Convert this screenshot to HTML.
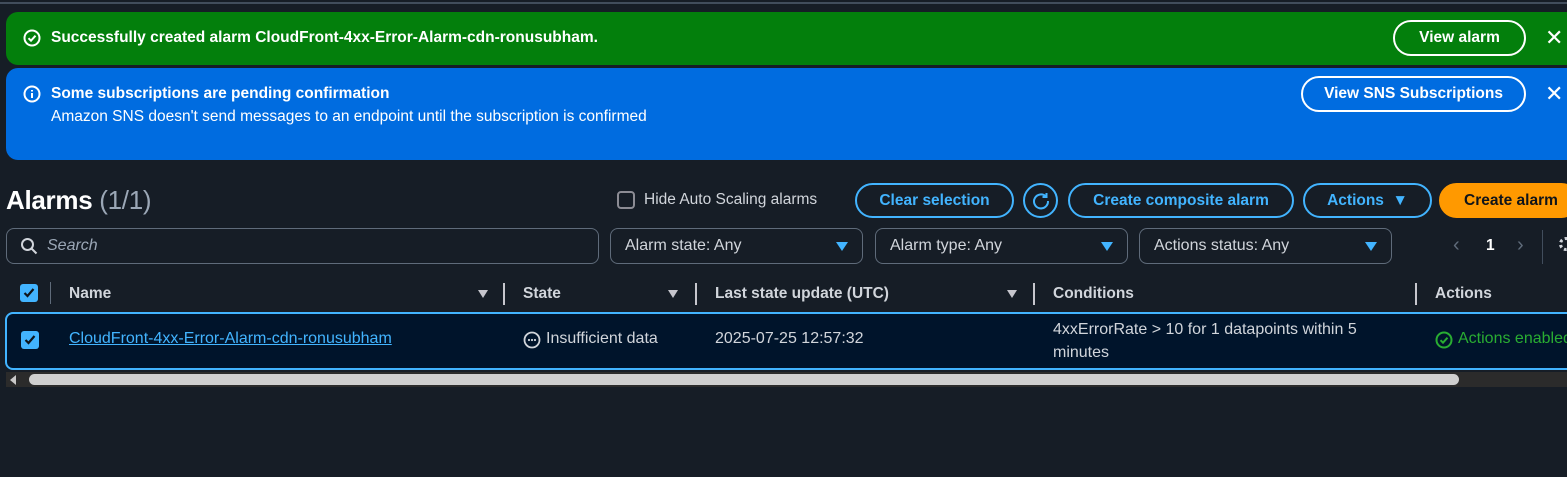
<!DOCTYPE html>
<html><head><meta charset="utf-8"><style>
*{box-sizing:border-box;margin:0;padding:0}
body{width:1567px;height:477px;overflow:hidden;background:#161d26;font-family:"Liberation Sans",sans-serif;color:#d1d5db;position:relative;font-size:16px}
.a{position:absolute;white-space:nowrap}
.banner{position:absolute;left:6px;width:1600px;border-radius:12px}
.wbtn{position:absolute;border:2px solid #fff;border-radius:20px;color:#fff;font-weight:bold;font-size:15.5px;text-align:center}
.btn{position:absolute;top:183px;height:35px;border:2px solid #42b4ff;border-radius:18px;color:#42b4ff;font-weight:bold;font-size:15.5px;text-align:center;line-height:31px}
.sel{position:absolute;top:228px;height:36px;border:1px solid #5f6b7a;border-radius:8px;color:#d1d5db;font-size:16px;line-height:34px;padding-left:14px}
.tri{position:absolute;right:14px;top:13px;width:0;height:0;border-left:6px solid transparent;border-right:6px solid transparent;border-top:9px solid #42b4ff}
.hd{position:absolute;top:285px;font-weight:bold;font-size:15.5px;color:#d1d5db}
.dv{position:absolute;top:283px;width:2px;height:22px;background:#c6c6cd}
.sort{position:absolute;top:290px;width:0;height:0;border-left:5px solid transparent;border-right:5px solid transparent;border-top:8px solid #c6c6cd}
.cb{position:absolute;width:18px;height:18px;background:#42b4ff;border-radius:3px}
</style></head><body>
<div class="a" style="left:0;top:2px;width:1567px;height:2px;background:#414d5c"></div>

<div class="banner" style="top:12px;height:53px;background:#037f0c"></div>
<svg class="a" style="left:23px;top:29px" width="18" height="18" viewBox="0 0 18 18"><circle cx="9" cy="9" r="7.5" fill="none" stroke="#fff" stroke-width="2"/><path d="M5.5 9.2l2.5 2.5 4.5-5" fill="none" stroke="#fff" stroke-width="2"/></svg>
<div class="a" style="left:51px;top:29px;color:#fff;font-weight:bold;font-size:15.5px">Successfully created alarm CloudFront-4xx-Error-Alarm-cdn-ronusubham.</div>
<div class="wbtn" style="left:1393px;top:20px;width:133px;height:36px;line-height:32px">View alarm</div>
<div class="a" style="left:1545px;top:25px;color:#fff;font-size:22px;line-height:26px">✕</div>

<div class="banner" style="top:68px;height:92px;background:#006ce0"></div>
<svg class="a" style="left:23px;top:85px" width="18" height="18" viewBox="0 0 18 18"><circle cx="9" cy="9" r="7.5" fill="none" stroke="#fff" stroke-width="2"/><path d="M9 8v5M9 5v1.5" stroke="#fff" stroke-width="2"/></svg>
<div class="a" style="left:51px;top:85px;color:#fff;font-weight:bold;font-size:15.5px">Some subscriptions are pending confirmation</div>
<div class="a" style="left:51px;top:108px;color:#fff;font-size:15.5px">Amazon SNS doesn't send messages to an endpoint until the subscription is confirmed</div>
<div class="wbtn" style="left:1301px;top:76px;width:225px;height:36px;line-height:32px">View SNS Subscriptions</div>
<div class="a" style="left:1545px;top:81px;color:#fff;font-size:22px;line-height:26px">✕</div>

<div class="a" style="left:6px;top:185px;font-size:26px;font-weight:bold;color:#fff;letter-spacing:-0.3px">Alarms <span style="font-weight:normal;color:#9ba7b6">(1/1)</span></div>
<div class="a" style="left:617px;top:191px;width:18px;height:18px;border:2px solid #8c8c94;border-radius:4px"></div>
<div class="a" style="left:644px;top:191px;font-size:15.5px">Hide Auto Scaling alarms</div>
<div class="btn" style="left:855px;width:159px">Clear selection</div>
<div class="btn" style="left:1023px;width:35px;padding:0"><svg style="margin-top:6px" width="20" height="20" viewBox="0 0 20 20"><path d="M15 5.5A7 7 0 1 0 17 10" fill="none" stroke="#42b4ff" stroke-width="2"/><path d="M15.5 2v4h-4" fill="none" stroke="#42b4ff" stroke-width="2"/></svg></div>
<div class="btn" style="left:1068px;width:226px">Create composite alarm</div>
<div class="btn" style="left:1303px;width:129px">Actions &nbsp;▼</div>
<div class="btn" style="left:1439px;width:140px;background:#ff9900;border-color:#ff9900;color:#0f141a;text-align:left;padding-left:23px">Create alarm</div>

<div class="sel" style="left:6px;width:593px;padding-left:40px;font-style:italic;color:#9ba7b6">Search</div>
<svg class="a" style="left:20px;top:237px" width="18" height="18" viewBox="0 0 18 18"><circle cx="7.5" cy="7.5" r="5.5" fill="none" stroke="#d1d5db" stroke-width="2"/><path d="M11.5 11.5l5 5" stroke="#d1d5db" stroke-width="2"/></svg>
<div class="sel" style="left:610px;width:253px">Alarm state: Any<div class="tri"></div></div>
<div class="sel" style="left:875px;width:253px">Alarm type: Any<div class="tri"></div></div>
<div class="sel" style="left:1139px;width:253px">Actions status: Any<div class="tri"></div></div>
<div class="a" style="left:1453px;top:234px;color:#5f6b7a;font-size:20px">‹</div>
<div class="a" style="left:1486px;top:237px;color:#fff;font-weight:bold;font-size:15.5px">1</div>
<div class="a" style="left:1517px;top:234px;color:#5f6b7a;font-size:20px">›</div>
<div class="a" style="left:1542px;top:230px;width:1px;height:34px;background:#414d5c"></div>
<div class="a" style="left:1559px;top:237px;width:14px;height:14px;border:3px dotted #d1d5db;border-radius:50%"></div>

<div class="cb" style="left:20px;top:284px"><svg width="18" height="18"><path d="M4.5 9l3 3 6-7" fill="none" stroke="#0f141a" stroke-width="2.2"/></svg></div>
<div class="a" style="left:50px;top:282px;width:1px;height:22px;background:#5f6b7a"></div>
<div class="hd" style="left:69px">Name</div><div class="sort" style="left:478px"></div><div class="dv" style="left:503px"></div>
<div class="hd" style="left:523px">State</div><div class="sort" style="left:668px"></div><div class="dv" style="left:695px"></div>
<div class="hd" style="left:715px">Last state update (UTC)</div><div class="sort" style="left:1007px"></div><div class="dv" style="left:1033px"></div>
<div class="hd" style="left:1053px">Conditions</div><div class="dv" style="left:1415px"></div>
<div class="hd" style="left:1435px">Actions</div>

<div class="a" style="left:5px;top:312px;width:1600px;height:58px;background:#00142b;border:2px solid #42b4ff;border-radius:8px"></div>
<div class="cb" style="left:21px;top:331px"><svg width="18" height="18"><path d="M4.5 9l3 3 6-7" fill="none" stroke="#0f141a" stroke-width="2.2"/></svg></div>
<div class="a" style="left:69px;top:330px;color:#42b4ff;font-size:16px;text-decoration:underline">CloudFront-4xx-Error-Alarm-cdn-ronusubham</div>
<svg class="a" style="left:523px;top:331px" width="18" height="18" viewBox="0 0 18 18"><circle cx="9" cy="9" r="7.5" fill="none" stroke="#d1d5db" stroke-width="1.8"/><circle cx="6" cy="9" r="1.1" fill="#d1d5db"/><circle cx="9" cy="9" r="1.1" fill="#d1d5db"/><circle cx="12" cy="9" r="1.1" fill="#d1d5db"/></svg>
<div class="a" style="left:546px;top:330px;font-size:16px">Insufficient data</div>
<div class="a" style="left:715px;top:330px;font-size:16px">2025-07-25 12:57:32</div>
<div class="a" style="left:1053px;top:318px;font-size:16px;line-height:23px">4xxErrorRate &gt; 10 for 1 datapoints within 5<br>minutes</div>
<svg class="a" style="left:1435px;top:331px" width="18" height="18" viewBox="0 0 18 18"><circle cx="9" cy="9" r="7.5" fill="none" stroke="#29ad32" stroke-width="2"/><path d="M5.5 9.2l2.5 2.5 4.5-5" fill="none" stroke="#29ad32" stroke-width="2"/></svg>
<div class="a" style="left:1458px;top:330px;font-size:16px;color:#29ad32">Actions enabled</div>

<div class="a" style="left:6px;top:372px;width:1561px;height:15px;background:#2b2b2b"></div>
<div class="a" style="left:10px;top:375px;width:0;height:0;border-top:5px solid transparent;border-bottom:5px solid transparent;border-right:6px solid #c8c8c8"></div>
<div class="a" style="left:29px;top:374px;width:1430px;height:11px;background:#cfcfcf;border-radius:6px"></div>
</body></html>
